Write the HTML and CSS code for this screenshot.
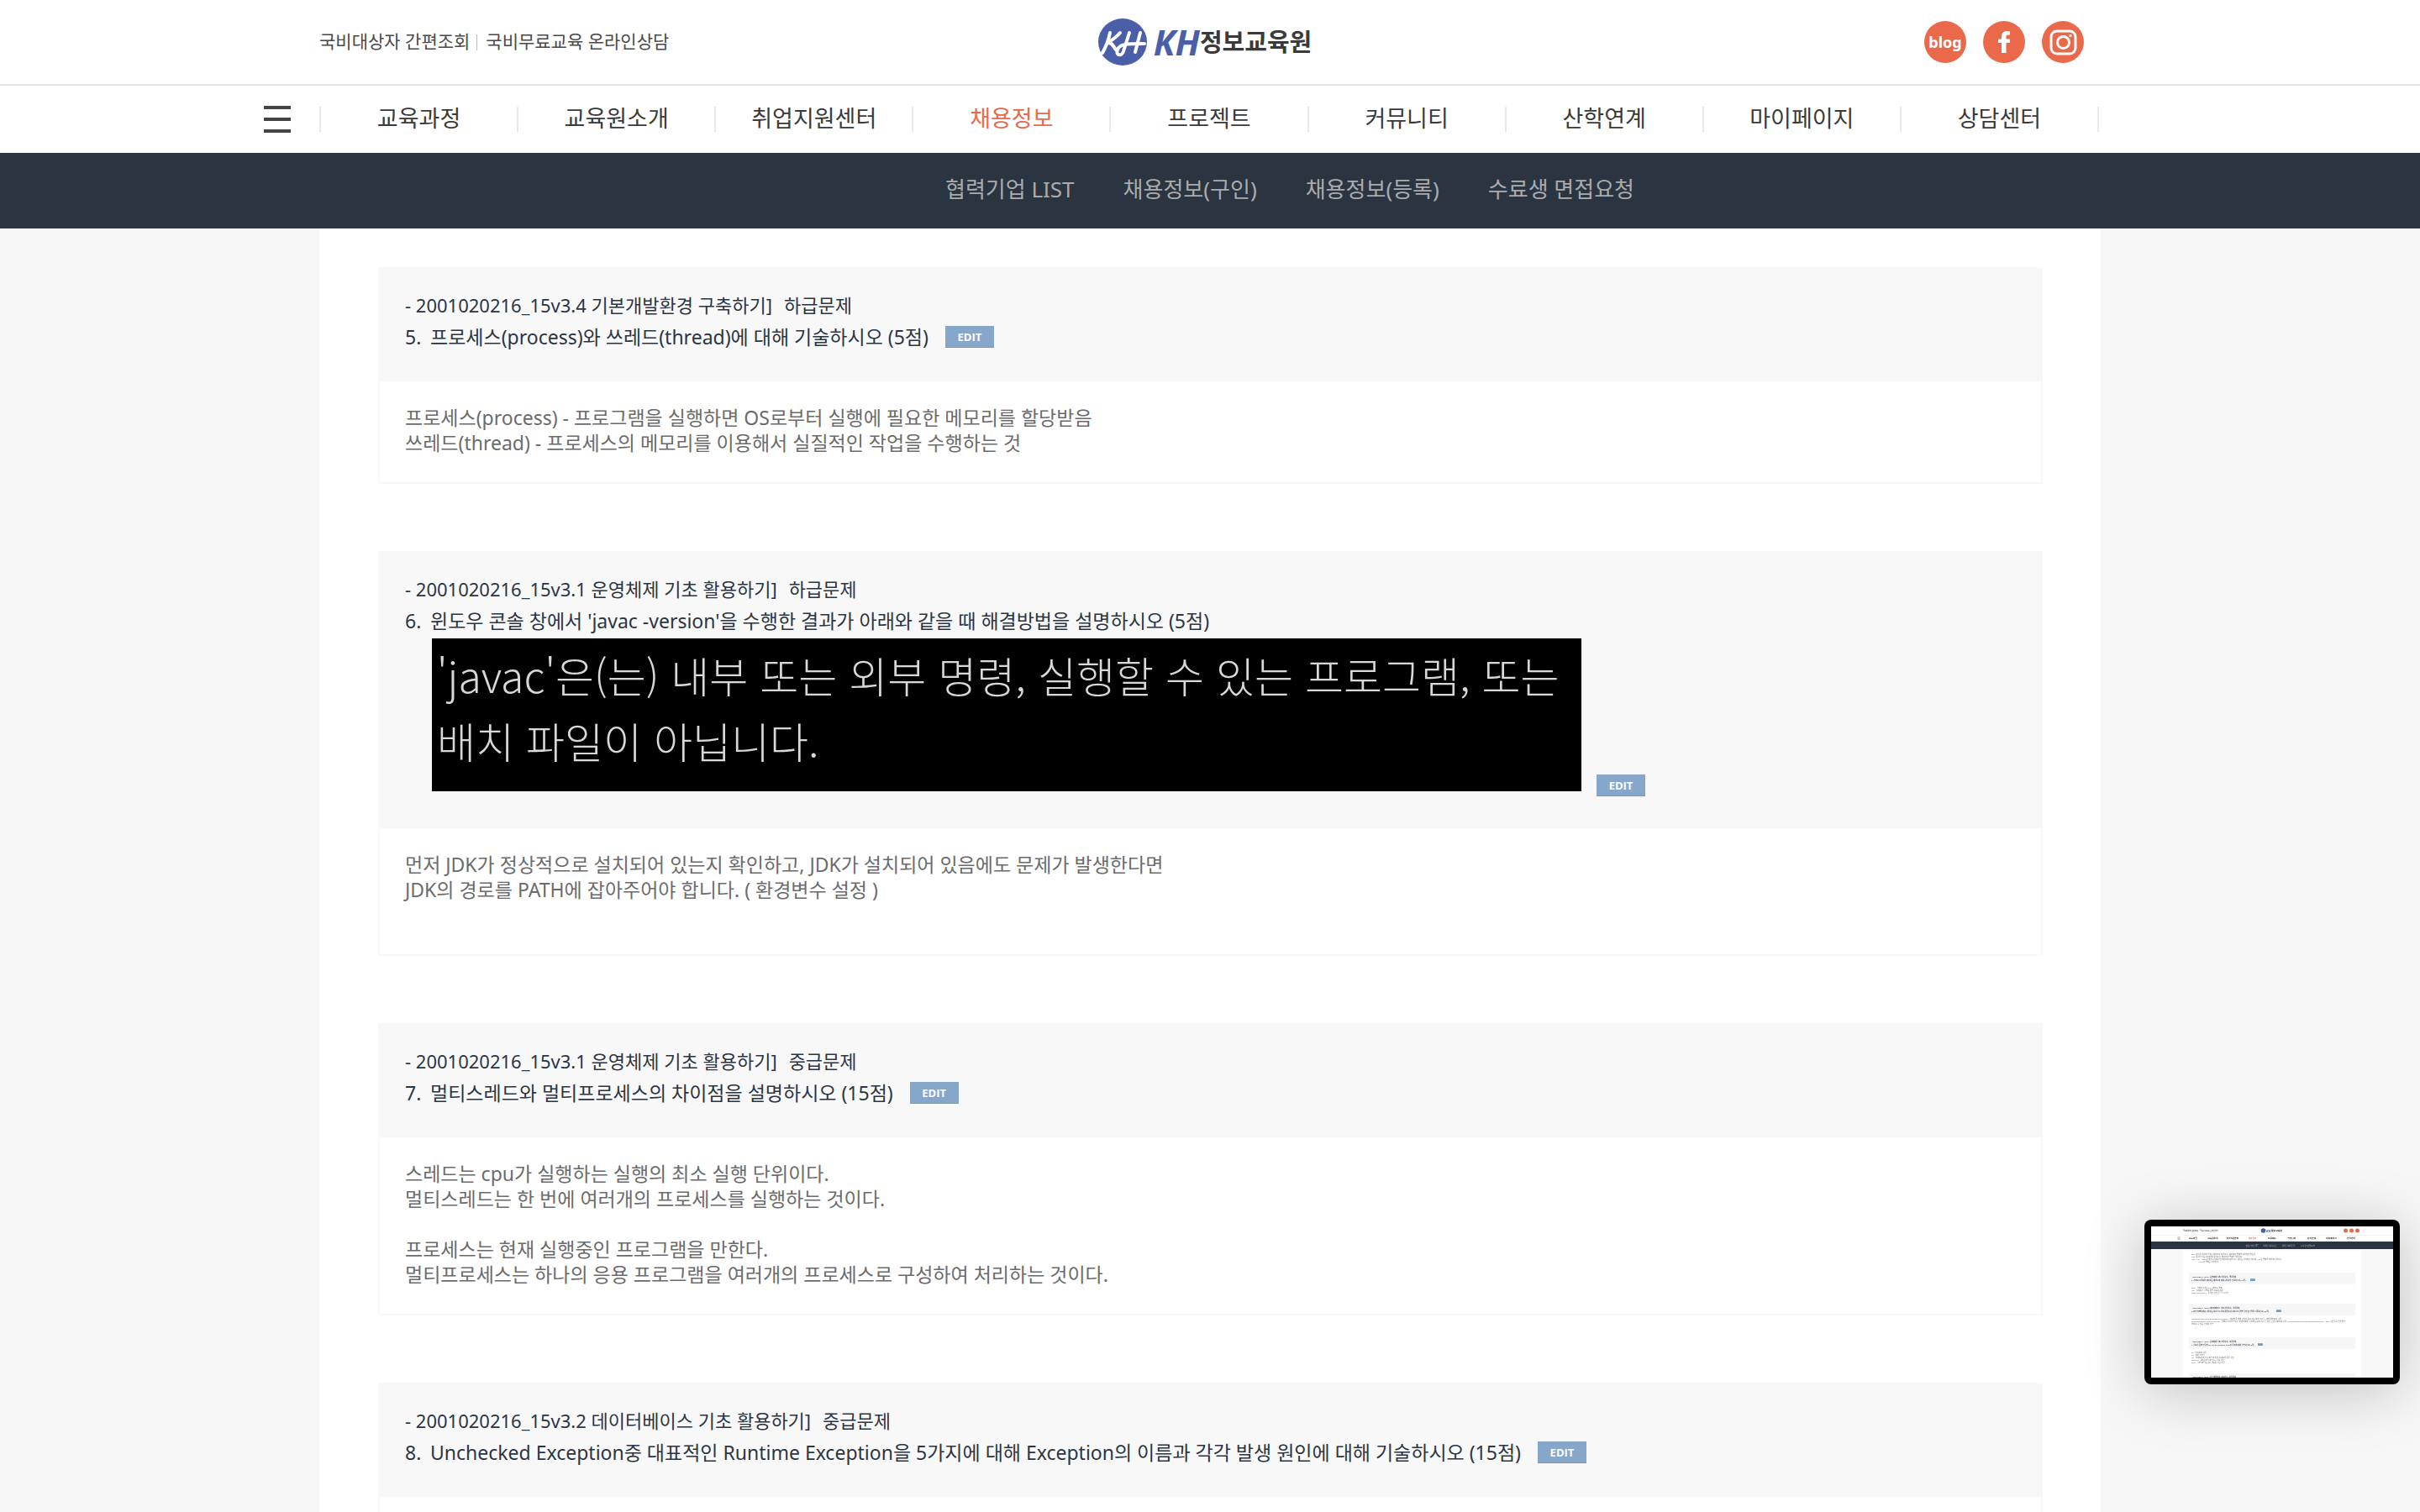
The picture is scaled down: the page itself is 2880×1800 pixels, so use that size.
FILE: index.html
```html
<!DOCTYPE html>
<html lang="ko">
<head>
<meta charset="utf-8">
<meta name="viewport" content="width=device-width, initial-scale=1">
<title>KH정보교육원</title>
<link rel="stylesheet" href="styles.css">
</head>
<body>
<header class="site-header">
  <div class="top">
    <div class="top-links">
      <a href="#">국비대상자 간편조회</a>
      <a href="#">국비무료교육 온라인상담</a>
    </div>
    <a class="logo" href="#">
      <svg class="logo-mark" viewBox="0 0 58 56" aria-hidden="true">
        <ellipse cx="29" cy="28" rx="29" ry="28" fill="#4a5fa8"/>
        <g fill="none" stroke="#fff" stroke-width="4" stroke-linecap="round" stroke-linejoin="round">
          <path d="M14 17C12 27 9 34 5 41"/>
          <path d="M26 17C21 23 16 26 11 29C17 28 18 34 21 37"/>
          <path d="M37 17L30 39C28 46 20 44 23 37C26 30 33 30 55 30"/>
          <path d="M50 17L44 40"/>
        </g>
      </svg>
      <span class="logo-kh">KH</span><span class="logo-name">정보교육원</span>
    </a>
    <div class="social">
      <a class="social-link" href="#" aria-label="블로그"><span>blog</span></a>
      <a class="social-link" href="#" aria-label="페이스북">
        <svg viewBox="0 0 50 50" aria-hidden="true"><path d="M22 38V26H18v-4.500h4V19c0-5 2.500-7 6.500-7H32v4.500h-2.300c-1.500 0-2.200.7-2.200 2.300v2.700H32V26h-4.500v12z" fill="#fff"/></svg>
      </a>
      <a class="social-link" href="#" aria-label="인스타그램">
        <svg viewBox="0 0 50 50" fill="none" stroke="#fff" stroke-width="3" aria-hidden="true"><rect x="11" y="12" width="29" height="27" rx="7"/><circle cx="25.500" cy="25.500" r="7"/><circle cx="34" cy="17.500" r="1" fill="#fff" stroke-width="1.500"/></svg>
      </a>
    </div>
  </div>
  <nav class="main-nav" aria-label="주 메뉴">
    <button class="menu-button" type="button" aria-label="전체 메뉴"><i></i><i></i><i></i></button>
    <ul class="menu">
      <li><a href="#">교육과정</a></li>
      <li><a href="#">교육원소개</a></li>
      <li><a href="#">취업지원센터</a></li>
      <li><a class="current" href="#">채용정보</a></li>
      <li><a href="#">프로젝트</a></li>
      <li><a href="#">커뮤니티</a></li>
      <li><a href="#">산학연계</a></li>
      <li><a href="#">마이페이지</a></li>
      <li><a href="#">상담센터</a></li>
    </ul>
  </nav>
  <nav class="sub-nav" aria-label="채용정보 메뉴">
    <a href="#">협력기업 LIST</a>
    <a href="#">채용정보(구인)</a>
    <a href="#">채용정보(등록)</a>
    <a href="#">수료생 면접요청</a>
  </nav>
</header>

<main class="content">
  <article class="card">
    <header class="card-head">
      <p class="unit"><span>- 2001020216_15v3.4 기본개발환경 구축하기]</span><span>하급문제</span></p>
      <div class="question">
        <span>5.</span>
        <div class="ask"><h2>프로세스(process)와 쓰레드(thread)에 대해 기술하시오 (5점)</h2><button class="edit" type="button">EDIT</button></div>
      </div>
    </header>
    <div class="answer">
      <p>프로세스(process) - 프로그램을 실행하면 OS로부터 실행에 필요한 메모리를 할당받음<br>쓰레드(thread) - 프로세스의 메모리를 이용해서 실질적인 작업을 수행하는 것</p>
    </div>
  </article>

  <article class="card">
    <header class="card-head">
      <p class="unit"><span>- 2001020216_15v3.1 운영체제 기초 활용하기]</span><span>하급문제</span></p>
      <div class="question">
        <span>6.</span>
        <div>
          <h2>윈도우 콘솔 창에서 'javac -version'을 수행한 결과가 아래와 같을 때 해결방법을 설명하시오 (5점)</h2>
          <div class="attachment">
            <p class="console">'javac'은(는) 내부 또는 외부 명령, 실행할 수 있는 프로그램, 또는<br>배치 파일이 아닙니다.</p>
            <button class="edit" type="button">EDIT</button>
          </div>
        </div>
      </div>
    </header>
    <div class="answer">
      <p>먼저 JDK가 정상적으로 설치되어 있는지 확인하고, JDK가 설치되어 있음에도 문제가 발생한다면<br>JDK의 경로를 PATH에 잡아주어야 합니다. ( 환경변수 설정 )<br>&nbsp;</p>
    </div>
  </article>

  <article class="card">
    <header class="card-head">
      <p class="unit"><span>- 2001020216_15v3.1 운영체제 기초 활용하기]</span><span>중급문제</span></p>
      <div class="question">
        <span>7.</span>
        <div class="ask"><h2>멀티스레드와 멀티프로세스의 차이점을 설명하시오 (15점)</h2><button class="edit" type="button">EDIT</button></div>
      </div>
    </header>
    <div class="answer">
      <p>스레드는 cpu가 실행하는 실행의 최소 실행 단위이다.<br>멀티스레드는 한 번에 여러개의 프로세스를 실행하는 것이다.<br><br>프로세스는 현재 실행중인 프로그램을 만한다.<br>멀티프로세스는 하나의 응용 프로그램을 여러개의 프로세스로 구성하여 처리하는 것이다.</p>
    </div>
  </article>

  <article class="card">
    <header class="card-head">
      <p class="unit"><span>- 2001020216_15v3.2 데이터베이스 기초 활용하기]</span><span>중급문제</span></p>
      <div class="question">
        <span>8.</span>
        <div class="ask"><h2>Unchecked Exception중 대표적인 Runtime Exception을 5가지에 대해 Exception의 이름과 각각 발생 원인에 대해 기술하시오 (15점)</h2><button class="edit" type="button">EDIT</button></div>
      </div>
    </header>
    <div class="answer"></div>
  </article>
</main>

<aside class="preview" aria-label="화면 미리보기">
  <svg class="preview-page" viewBox="0 0 2880 1800">
    <rect width="2880" height="1800" fill="#f8f8f8"/>
    <rect width="2880" height="180" fill="#fff"/>
    <rect y="100" width="2880" height="4" fill="#ddd"/>
    <rect y="180" width="2880" height="90" fill="#2a3541"/>
    <rect x="380" y="290" width="2120" height="1510" fill="#fff"/>
    <g class="p-top"><text x="380" y="58">국비대상자 간편조회</text><text x="580" y="58">국비무료교육 온라인상담</text></g>
    <circle cx="1335" cy="50" r="28" fill="#4a5fa8"/>
    <text class="p-kh" x="1370" y="65">KH</text><text class="p-name" x="1430" y="62">정보교육원</text>
    <g fill="#e9694a"><circle cx="2315" cy="50" r="25"/><circle cx="2385" cy="50" r="25"/><circle cx="2455" cy="50" r="25"/></g>
    <path d="M314 128h32M314 142h32M314 156h32" stroke="#444" stroke-width="4"/>
    <g class="p-menu">
      <text x="498" y="151">교육과정</text><text x="734" y="151">교육원소개</text><text x="969" y="151">취업지원센터</text><text class="p-current" x="1204" y="151">채용정보</text><text x="1439" y="151">프로젝트</text><text x="1674" y="151">커뮤니티</text><text x="1910" y="151">산학연계</text><text x="2145" y="151">마이페이지</text><text x="2380" y="151">상담센터</text>
    </g>
    <g class="p-sub"><text x="1124" y="235">협력기업 LIST</text><text x="1333" y="235">채용정보(구인)</text><text x="1555" y="235">채용정보(등록)</text><text x="1777" y="235">수료생 면접요청</text></g>
    <g fill="#f6f6f6"><rect x="450" y="550" width="1980" height="136"/><rect x="450" y="920" width="1980" height="136"/><rect x="450" y="1320" width="1980" height="136"/><rect x="450" y="1750" width="1980" height="50"/></g>
    <path fill="none" stroke="#f6f6f6" stroke-width="3" d="M450 290V470H2430V290M450 680V840H2430V680M450 1050V1240H2430V1050M450 1450V1670H2430V1450"/>
    <g class="p-answer">
      <text x="480" y="342">Set : 순서를 유지하지 않는 데이터의 집합으로, 데이터의 중복을 허용하지 않는다</text>
      <text x="480" y="372">List : 순서가 있는 데이터의 집합으로, 데이터의 중복을 허용한다</text>
      <text x="480" y="402">Map : Key, Value의 쌍으로 이루어진 데이터의 집합으로, 순서는 유지되지 않으며, Key의 중복을 허용하지 않으나</text>
      <text x="560" y="432">Value의 중복은 허용한다</text>
      <text x="480" y="740">start - 스레드 시작(run()) 메소드 호출)</text>
      <text x="480" y="770">run - 스레드가 실행할 작업 코드를 작성</text>
      <text x="480" y="800">sleep(long time) - 주어진 시간만큼 일시정지</text>
      <text x="480" y="1110">ObjectInputStream/ObjectOutputStream - 데이터를 객체 단위로 읽고 쓰는 보조 스트림, 객체 직렬화에 사용</text>
      <text x="480" y="1140">BufferedReader, BufferedWriter - 입출력 효율을 높이기 위해 버퍼를 사용하는 보조 스트림, 라인 단위 입출력에 활용 InputStreamReader/OutputStreamWriter - byte 기반 스트림을 연결</text>
      <text x="480" y="1170">처리할 수 있음, 인코딩 가능</text>
      <text x="480" y="1505">cd - 디렉토리 이동</text>
      <text x="480" y="1535">cls - 화면 지우기</text>
      <text x="480" y="1565">dir - 디렉토리에 있는 파일과 하위 디렉토리 목록 확인</text>
      <text x="480" y="1595">ipconfig - 네트워크 정보 및 IP 정보 확인</text>
      <text x="480" y="1625">path - 실행 파일의 경로 정보를 확인/지정</text>
    </g>
    <g class="p-head">
      <text x="480" y="606">- 2001020216_15v3.1 운영체제 기초 활용하기]&#160; 중급문제</text>
      <text x="480" y="645">2. 스레드의 동작을 제어하는 메소드에 대해 3개 이상 기술하시오 (15점)</text>
      <text x="480" y="976">- 2001020216_15v3.2 데이터베이스 기초 활용하기]&#160; 상급문제</text>
      <text x="480" y="1015">3. 파일 입출력에서 사용하는 보조 스트림의 종류와 각 보조 스트림별 특징 및 장점을 기술하시오 (20점)</text>
      <text x="480" y="1376">- 2001020216_15v3.1 운영체제 기초 활용하기]&#160; 하급문제</text>
      <text x="480" y="1415">4. 윈도우 콘솔 명령어 cd, cls, dir, ipconfig, path의 동작에 대해 설명하시오 (5점)</text>
      <text x="480" y="1798">- 2001020216_15v3.4 기본개발환경 구축하기]&#160; 하급문제</text>
    </g>
    <g fill="#6f9bc8"><rect x="1180" y="622" width="58" height="28"/><rect x="1490" y="992" width="58" height="28"/><rect x="1270" y="1392" width="58" height="28"/></g>
  </svg>
</aside>
</body>
</html>
```
FILE: styles.css
```css
* { box-sizing: border-box; }

body {
  margin: 0;
  height: 100vh;
  overflow: hidden;
  display: flex;
  flex-direction: column;
  background: #f7f7f7;
  color: #3a3a3a;
  font-family: "Noto Sans", "Noto Sans CJK KR", sans-serif;
  font-size: 23px;
}

a { color: inherit; text-decoration: none; }
p, h2, ul { margin: 0; padding: 0; }
button { border: 0; padding: 0; font: inherit; cursor: pointer; }

.site-header { flex: none; background: #fff; }

/* top bar */
.top {
  display: grid;
  grid-template-columns: 1fr auto 1fr;
  align-items: center;
  height: 102px;
  padding: 0 380px;
  border-bottom: 2px solid #e3e3e3;
}
.top-links { display: flex; align-items: center; padding-bottom: 4px; font-size: 21px; color: #4a4a4a; }
.top-links a + a { position: relative; margin-left: 8px; padding-left: 11px; }
.top-links a + a::before {
  content: "";
  position: absolute;
  left: 0;
  top: 8px;
  width: 1px;
  height: 19px;
  background: #bbb;
}
.logo { display: flex; align-items: center; height: 56px; padding-right: 12px; line-height: 56px; }
.logo-mark { width: 58px; height: 56px; margin-right: 8px; }
.logo-kh { font: italic 700 42px/56px "Noto Sans", sans-serif; color: #4a5fa8; }
.logo-name { font-size: 29px; font-weight: 700; }
.social { display: flex; gap: 20px; justify-content: flex-end; padding-right: 20px; }
.social-link {
  display: grid;
  place-items: center;
  width: 50px;
  height: 50px;
  border-radius: 50%;
  background: #e9694a;
  color: #fff;
  font: 700 18px/24px "Noto Sans", sans-serif;
}
.social-link svg { width: 50px; height: 50px; }

/* main menu */
.main-nav {
  display: grid;
  grid-template-columns: 1fr minmax(0, 2120px) 1fr;
  align-items: center;
  height: 80px;
}
.menu-button {
  display: flex;
  flex-direction: column;
  gap: 10px;
  justify-self: end;
  width: 32px;
  margin-right: 34px;
  background: none;
}
.menu-button i { display: block; height: 4px; width: 100%; background: #444; }
.menu { display: flex; margin-right: 2px; list-style: none; border-left: 2px solid #e8e8e8; }
.menu li {
  flex: 1;
  height: 30px;
  line-height: 28px;
  border-right: 2px solid #e8e8e8;
  text-align: center;
  font-size: 27px;
}
.menu .current { color: #e9694a; }

.sub-nav {
  display: flex;
  justify-content: center;
  gap: 58px;
  height: 90px;
  line-height: 86px;
  padding-left: 190px;
  background: #2a3541;
  color: #ababab;
  font-size: 26px;
}

/* question list */
.content {
  flex: 1;
  min-height: 0;
  overflow: hidden;
  width: 100%;
  max-width: 2120px;
  margin: 0 auto;
  padding: 46px 69px 0 70px;
  background: #fff;
}
.card { margin-bottom: 80px; }
.card-head { padding: 26px 32px 34px; background: #f8f8f8; color: #2b3544; line-height: 38px; }
.unit { display: flex; gap: 14px; font-size: 22px; }
.question { display: grid; grid-template-columns: 30px 1fr; }
.question h2 { font-size: 23px; font-weight: 400; }
.ask { display: flex; align-items: center; gap: 20px; }
.edit {
  width: 58px;
  height: 26px;
  background: #87a7ca;
  color: #fff;
  border-bottom: 1px solid #7897b9;
  font: 700 13px/24px "Open Sans", sans-serif;
}
.attachment { display: flex; align-items: flex-end; gap: 18px; margin: 2px 0 4px; }
.console {
  width: 1368px;
  height: 182px;
  margin: 0 0 6px 2px;
  padding: 4px 6px;
  background: #000;
  color: #d8d8d8;
  font: 300 50px/78px "Noto Sans CJK KR", sans-serif;
  white-space: nowrap;
}
.answer {
  min-height: 122px;
  padding: 28px 30px 32px;
  border: 2px solid #f8f8f8;
  border-top: 0;
  color: #6b6b6d;
  line-height: 30px;
}

/* floating page preview */
.preview {
  position: fixed;
  right: 24px;
  bottom: 152px;
  width: 304px;
  height: 196px;
  padding: 8px;
  border-radius: 8px;
  background: #000;
  box-shadow: 0 8px 70px rgba(0, 0, 0, 0.22);
}
.preview-page { display: block; width: 288px; height: 180px; }
.p-top { font-size: 21px; }
.p-kh { font: italic 700 42px "Noto Sans", sans-serif; fill: #4a5fa8; }
.p-name { font-size: 28px; font-weight: 700; }
.p-menu { font-size: 27px; font-weight: 500; text-anchor: middle; }
.p-current { fill: #e9694a; }
.p-sub { font-size: 26px; fill: #ababab; }
.p-answer { font-size: 23px; fill: #6b6b6d; }
.p-head { font-size: 22px; font-weight: 500; fill: #2b3544; }
```
